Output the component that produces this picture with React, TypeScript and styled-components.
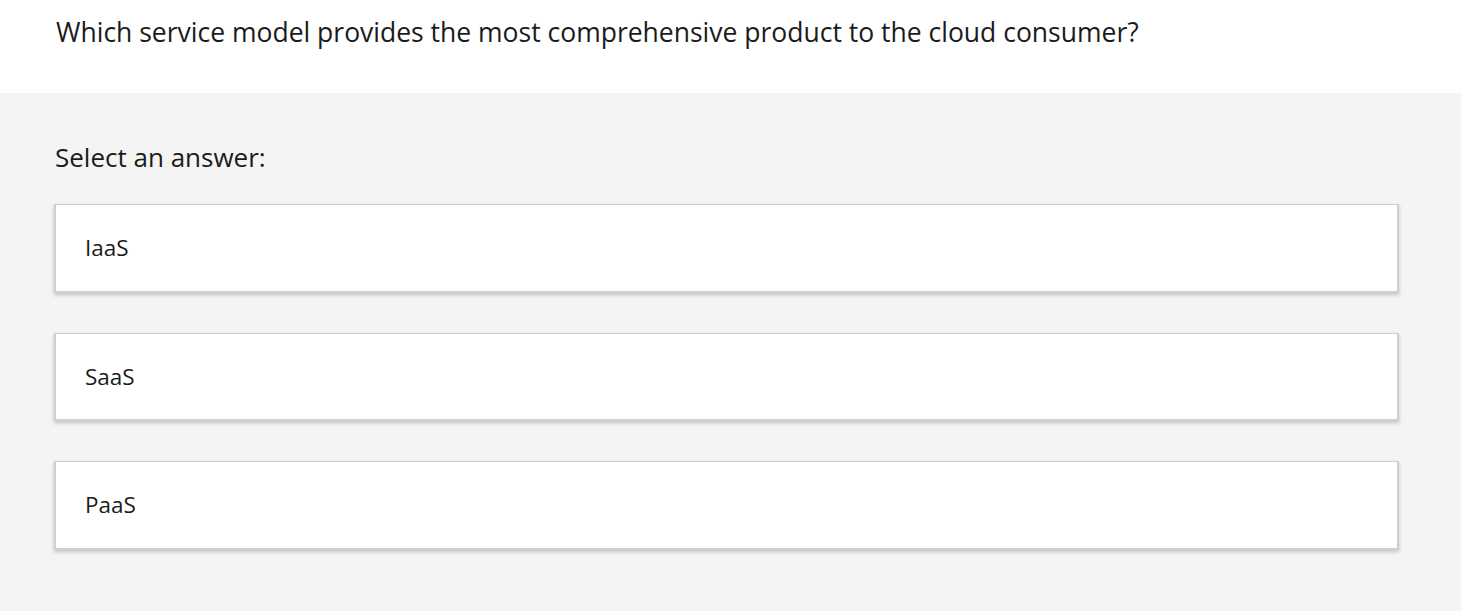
import React from "react";
import styled, { createGlobalStyle } from "styled-components";

const Global = createGlobalStyle`
  html, body { margin: 0; padding: 0; background: #f4f4f4; }
  body { font-family: "Open Sans", "Noto Sans", sans-serif; color: #1b1b1b; }
`;

const Page = styled.div`
  display: flex;
  flex-direction: column;
  min-height: 611px;
`;

const Header = styled.header`
  background: #ffffff;
  height: 93px;
  box-sizing: border-box;
  padding: 12px 56px 0;
`;

const Question = styled.h1`
  margin: 0;
  font-size: 26.5px;
  font-weight: 400;
  line-height: 40px;
  letter-spacing: 0;
  white-space: nowrap;
`;

const Body = styled.main`
  flex: 1;
  background: #f4f4f4;
  padding: 46px 62px 40px 54px;
`;

const Prompt = styled.div`
  font-size: 26px;
  line-height: 36px;
  margin: 0 0 29px 1px;
`;

const Options = styled.div`
  display: flex;
  flex-direction: column;
  gap: 40px;
`;

const Option = styled.button`
  display: flex;
  align-items: center;
  height: 88.5px;
  box-sizing: border-box;
  width: 100%;
  padding: 0 29px;
  background: #ffffff;
  border: 2px solid #cfcfcf;
  border-top-width: 1px;
  box-shadow: 0 2px 4px rgba(0, 0, 0, 0.2);
  font-family: inherit;
  font-size: 22.5px;
  color: #1b1b1b;
  text-align: left;
  cursor: pointer;
`;

const answers = ["IaaS", "SaaS", "PaaS"];

export default function App() {
  return (
    <>
      <Global />
      <Page>
        <Header>
          <Question>Which service model provides the most comprehensive product to the cloud consumer?</Question>
        </Header>
        <Body>
          <Prompt>Select an answer:</Prompt>
          <Options>
            {answers.map((a) => (
              <Option key={a}>{a}</Option>
            ))}
          </Options>
        </Body>
      </Page>
    </>
  );
}
